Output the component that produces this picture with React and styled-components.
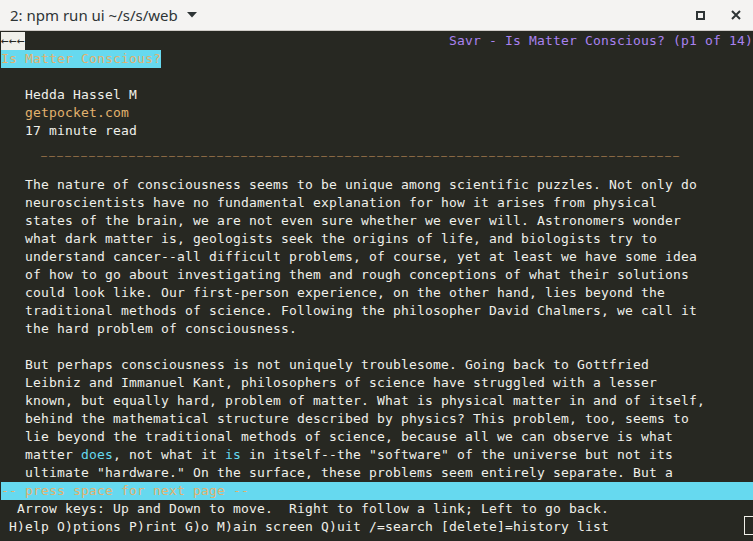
import React from "react";
import styled, { createGlobalStyle } from "styled-components";

const GlobalStyle = createGlobalStyle`
  html, body {
    margin: 0;
    padding: 0;
    background: #272822;
  }
`;

const BG = "#272822";
const FG = "#f0f0ea";
const TAN = "#e2b26e";
const CYAN = "#66d9ef";
const PURPLE = "#a982ef";

const Window = styled.div`
  width: 753px;
  height: 541px;
  display: flex;
  flex-direction: column;
  overflow: hidden;
`;

const TitleBar = styled.div`
  height: 30px;
  flex: none;
  display: flex;
  align-items: center;
  justify-content: space-between;
  padding: 0 12px 0 10px;
  background: #f4f3f2;
  border-bottom: 1px solid #cfccc8;
  font-family: "Noto Sans", "DejaVu Sans", sans-serif;
  font-size: 15px;
  color: #2e3436;
`;

const TabTitle = styled.div`
  display: flex;
  align-items: center;
  gap: 9px;
`;

const Controls = styled.div`
  display: flex;
  align-items: center;
  gap: 26px;
`;

const Screen = styled.div`
  flex: 1;
  background: ${BG};
  padding: 1px 0 0 1px;
  font-family: "DejaVu Sans Mono", "Liberation Mono", monospace;
  font-size: 13px;
  letter-spacing: 0.174px;
  color: ${FG};
`;

const Row = styled.div`
  height: 18px;
  line-height: 18px;
  white-space: pre;
  display: flex;
  justify-content: ${(p) => (p.$split ? "space-between" : "flex-start")};
  background: ${(p) => (p.$bar ? CYAN : "transparent")};
  color: ${(p) => (p.$bar ? TAN : FG)};
`;

const Mark = styled.span`
  background: ${(p) => p.$bg || "transparent"};
  color: ${(p) => p.$color || "inherit"};
`;

/* lynx draws <hr> as underscores; the terminal font leaves a gap between them */
const Rule = styled.span`
  margin-left: 40px;
  font-size: 10px;
  letter-spacing: 1.98px;
  line-height: 18px;
  color: ${TAN};
  transform: translateY(2px);
`;

const Cursor = styled.span`
  margin-left: auto;
  width: 9px;
  height: 19px;
  box-sizing: border-box;
  border: 1px solid ${FG};
  border-right: none;
  margin-top: -2px;
`;

const body = [
  [],
  [{ t: "   Hedda Hassel M" }],
  [{ t: "   " }, { t: "getpocket.com", c: TAN }],
  [{ t: "   17 minute read" }],
  "rule",
  [],
  [{ t: "   The nature of consciousness seems to be unique among scientific puzzles. Not only do" }],
  [{ t: "   neuroscientists have no fundamental explanation for how it arises from physical" }],
  [{ t: "   states of the brain, we are not even sure whether we ever will. Astronomers wonder" }],
  [{ t: "   what dark matter is, geologists seek the origins of life, and biologists try to" }],
  [{ t: "   understand cancer--all difficult problems, of course, yet at least we have some idea" }],
  [{ t: "   of how to go about investigating them and rough conceptions of what their solutions" }],
  [{ t: "   could look like. Our first-person experience, on the other hand, lies beyond the" }],
  [{ t: "   traditional methods of science. Following the philosopher David Chalmers, we call it" }],
  [{ t: "   the hard problem of consciousness." }],
  [],
  [{ t: "   But perhaps consciousness is not uniquely troublesome. Going back to Gottfried" }],
  [{ t: "   Leibniz and Immanuel Kant, philosophers of science have struggled with a lesser" }],
  [{ t: "   known, but equally hard, problem of matter. What is physical matter in and of itself," }],
  [{ t: "   behind the mathematical structure described by physics? This problem, too, seems to" }],
  [{ t: "   lie beyond the traditional methods of science, because all we can observe is what" }],
  [
    { t: "   matter " },
    { t: "does", c: CYAN },
    { t: ", not what it " },
    { t: "is", c: CYAN },
    { t: ' in itself--the "software" of the universe but not its' },
  ],
  [{ t: '   ultimate "hardware." On the surface, these problems seem entirely separate. But a' }],
];

function Caret() {
  return (
    <svg width="10" height="6" viewBox="0 0 10 6">
      <path d="M0 0 H10 L5 5.5 Z" fill="#2e3436" />
    </svg>
  );
}

function MaximizeIcon() {
  return (
    <svg width="9" height="9" viewBox="0 0 9 9">
      <rect x="1" y="1" width="7" height="7" fill="none" stroke="#2e3436" strokeWidth="2" />
    </svg>
  );
}

function CloseIcon() {
  return (
    <svg width="10" height="10" viewBox="0 0 10 10">
      <path d="M1 1 L9 9 M9 1 L1 9" stroke="#2e3436" strokeWidth="2" />
    </svg>
  );
}

export default function App() {
  return (
    <>
      <GlobalStyle />
      <Window>
        <TitleBar>
          <TabTitle>
            <span>2: npm run ui ~/s/s/web</span>
            <Caret />
          </TabTitle>
          <Controls>
            <MaximizeIcon />
            <CloseIcon />
          </Controls>
        </TitleBar>
        <Screen>
          <Row $split>
            <Mark $bg={FG} $color={BG}>←←←</Mark>
            <Mark $color={PURPLE}>Savr - Is Matter Conscious? (p1 of 14)</Mark>
          </Row>
          <Row>
            <Mark $bg={CYAN} $color={TAN}>Is Matter Conscious?</Mark>
          </Row>
          {body.map((line, i) =>
            line === "rule" ? (
              <Row key={i}>
                <Rule>{"_".repeat(80)}</Rule>
              </Row>
            ) : (
              <Row key={i}>
                {line.map((s, j) => (
                  <Mark key={j} $color={s.c}>
                    {s.t}
                  </Mark>
                ))}
              </Row>
            )
          )}
          <Row $bar>-- press space for next page --</Row>
          <Row>  Arrow keys: Up and Down to move.  Right to follow a link; Left to go back.</Row>
          <Row>
            {" H)elp O)ptions P)rint G)o M)ain screen Q)uit /=search [delete]=history list"}
            <Cursor />
          </Row>
        </Screen>
      </Window>
    </>
  );
}
